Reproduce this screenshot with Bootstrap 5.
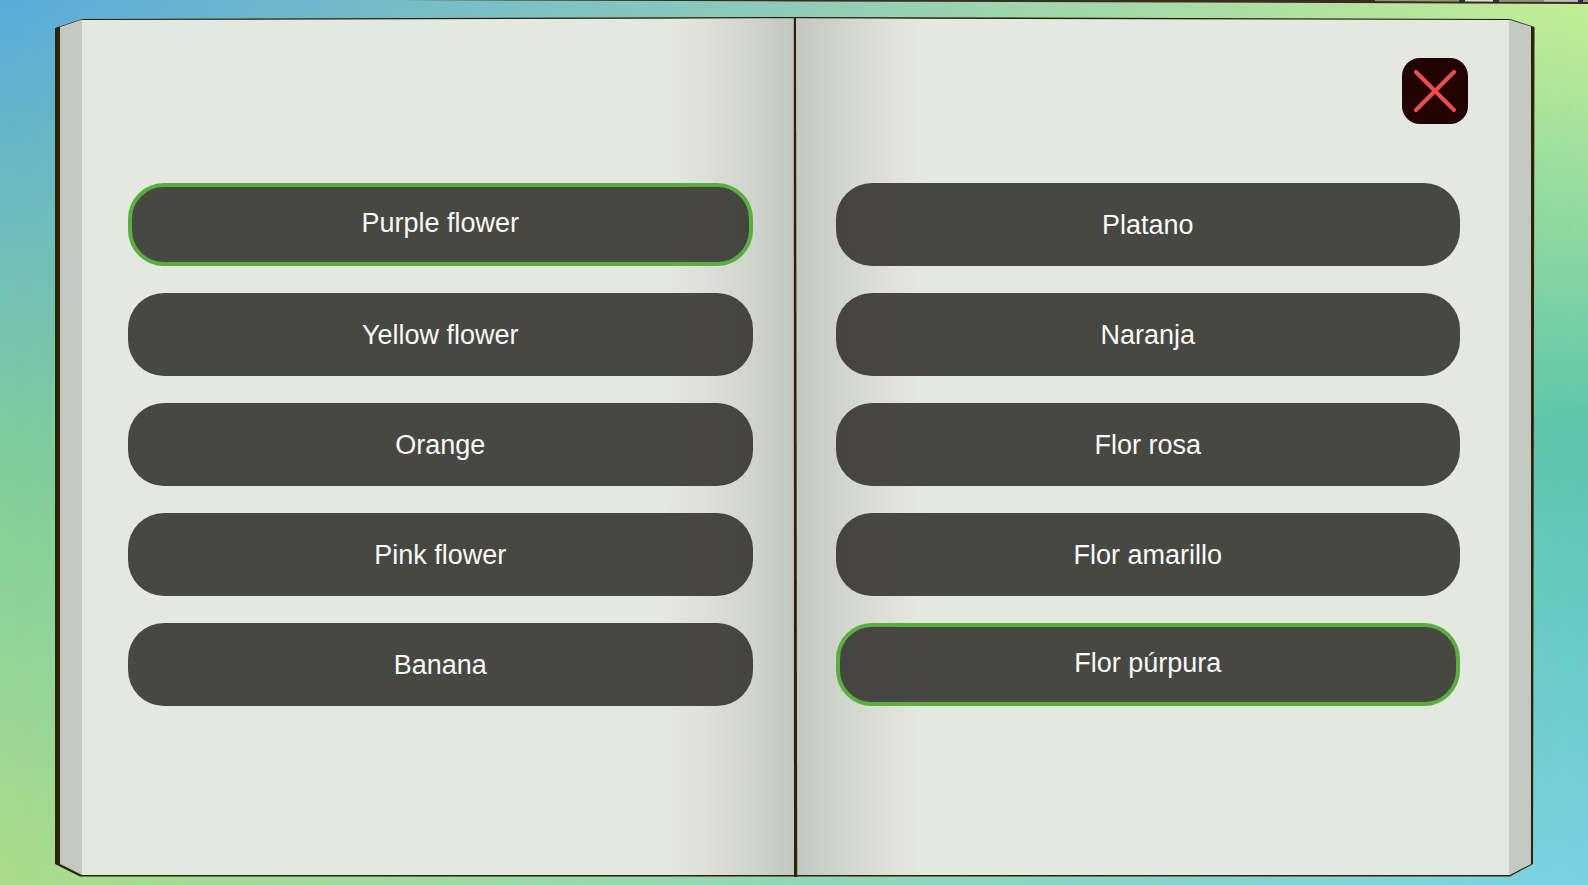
<!DOCTYPE html>
<html lang="en">
<head>
<meta charset="utf-8">
<meta name="viewport" content="width=device-width, initial-scale=1">
<title>Word matching book</title>
<link rel="stylesheet" href="https://cdn.jsdelivr.net/npm/bootstrap@5.3.0/dist/css/bootstrap.min.css">
<style>
body {
  font-family: "Liberation Sans", Arial, sans-serif;
  background: linear-gradient(#5aabda 0%, #70bfb9 29%, #80cd9b 52%, #95d596 75%, #abdc8b 100%);
}
/* right-hand backdrop, faded in over the left-hand one */
.backdrop {
  background: linear-gradient(#c4ee94 0%, #9fdf9c 18%, #5bc4ab 49%, #66c9c1 68%, #7ad0e4 100%);
  -webkit-mask-image: linear-gradient(90deg, transparent, #000);
  mask-image: linear-gradient(90deg, transparent, #000);
}
.top-rail { height: 4px; }
.desk { padding: 17px 54px 8px 55px; }
.book-head { padding: 41px 66px 59px; }
.columns { display: grid; grid-template-columns: 1fr 1fr; gap: 83px; padding: 0 74px 0 73px; }
.word-list { display: flex; flex-direction: column; gap: 27px; }
.word-btn {
  height: 83px;
  padding: 0 16px;
  border: 4px solid transparent;
  border-radius: 36px;
  background: rgba(42, 41, 37, .84) border-box;
  color: #fafafa;
  font-size: 27px;
  line-height: 32px;
}
.word-btn[aria-pressed="true"] {
  padding-bottom: 4px;
  border-color: #58ae40;
}
.close-btn {
  width: 66px;
  height: 66px;
  border: 0;
  border-radius: 18px;
  background: #210303;
}
</style>
<script src="https://cdn.jsdelivr.net/npm/bootstrap@5.3.0/dist/js/bootstrap.bundle.min.js"></script>
</head>
<body class="m-0">
<div class="position-relative vh-100 overflow-hidden">
  <div class="backdrop position-absolute top-0 start-0 w-100 h-100"></div>
  <svg class="top-rail position-absolute top-0 start-0 w-100" viewBox="0 0 1588 4" preserveAspectRatio="none" aria-hidden="true">
    <path d="M1370 0H1588V2L1370 1Z" fill="#8f8f8b"/>
    <path d="M1465 0h28v2h-28z" fill="#dcdcdc"/>
    <path d="M1544 0h34v2h-34z" fill="#bcbcbc"/>
    <path d="M1369 0h6v2h-6zM1459 0h6v2h-6zM1493 0h6v2h-6zM1578 0h5v2h-5z" fill="#2d2d4a"/>
    <path d="M400 0H1370V1L1588 2V4L1340 3L800 1.4Z" fill="#3b2a22"/>
  </svg>

  <main class="desk position-relative d-flex h-100">
    <div class="position-relative flex-grow-1">
      <svg class="position-absolute top-0 start-0 w-100 h-100 overflow-visible" viewBox="0 0 1479 860" preserveAspectRatio="none" aria-hidden="true">
        <defs>
          <linearGradient id="shadeLeft">
            <stop offset="0" stop-color="#e5e8e0"/>
            <stop offset=".35" stop-color="#dcded7"/>
            <stop offset=".7" stop-color="#d0d2cc"/>
            <stop offset="1" stop-color="#c3c5c0"/>
          </linearGradient>
          <linearGradient id="shadeRight">
            <stop offset="0" stop-color="#c4c6c1"/>
            <stop offset=".35" stop-color="#d1d3cd"/>
            <stop offset=".7" stop-color="#dddfd8"/>
            <stop offset="1" stop-color="#e5e8e0"/>
          </linearGradient>
        </defs>
        <!-- cover -->
        <path d="M0 11L27 2L740 0L1455 2L1479.5 10V11L1478 847L1455 859.5H25L0 847Z" fill="#2c2204"/>
        <path d="M5 10L27 2.5V858L5 847Z" fill="#c5c7c2"/>
        <path d="M1454 2.5L1476 9.5V847L1454 858.5Z" fill="#c5c7c2"/>
        <!-- pages -->
        <path d="M27 3L739 1.5L1454 3V858H27Z" fill="#e5e8e0"/>
        <path d="M609 2L739 1.5V858H609Z" fill="url(#shadeLeft)"/>
        <path d="M741 1.5L868 2V858H741Z" fill="url(#shadeRight)"/>
        <path d="M738.8 0H741L742.2 860H739Z" fill="#2c2204"/>
      </svg>

      <div class="position-relative">
        <header class="book-head d-flex justify-content-end">
          <button type="button" class="close-btn p-0" aria-label="Close">
            <svg class="d-block" width="66" height="66" viewBox="0 0 66 66" fill="none" stroke="#ee4d4d" stroke-width="4.2" stroke-linecap="round" aria-hidden="true">
              <path d="M14 14L52 52M52 14L14 52"/>
            </svg>
          </button>
        </header>
        <div class="columns">
          <div class="word-list">
            <button type="button" class="word-btn" aria-pressed="true">Purple flower</button>
            <button type="button" class="word-btn">Yellow flower</button>
            <button type="button" class="word-btn">Orange</button>
            <button type="button" class="word-btn">Pink flower</button>
            <button type="button" class="word-btn">Banana</button>
          </div>
          <div class="word-list">
            <button type="button" class="word-btn">Platano</button>
            <button type="button" class="word-btn">Naranja</button>
            <button type="button" class="word-btn">Flor rosa</button>
            <button type="button" class="word-btn">Flor amarillo</button>
            <button type="button" class="word-btn" aria-pressed="true">Flor púrpura</button>
          </div>
        </div>
      </div>
    </div>
  </main>
</div>
</body>
</html>
